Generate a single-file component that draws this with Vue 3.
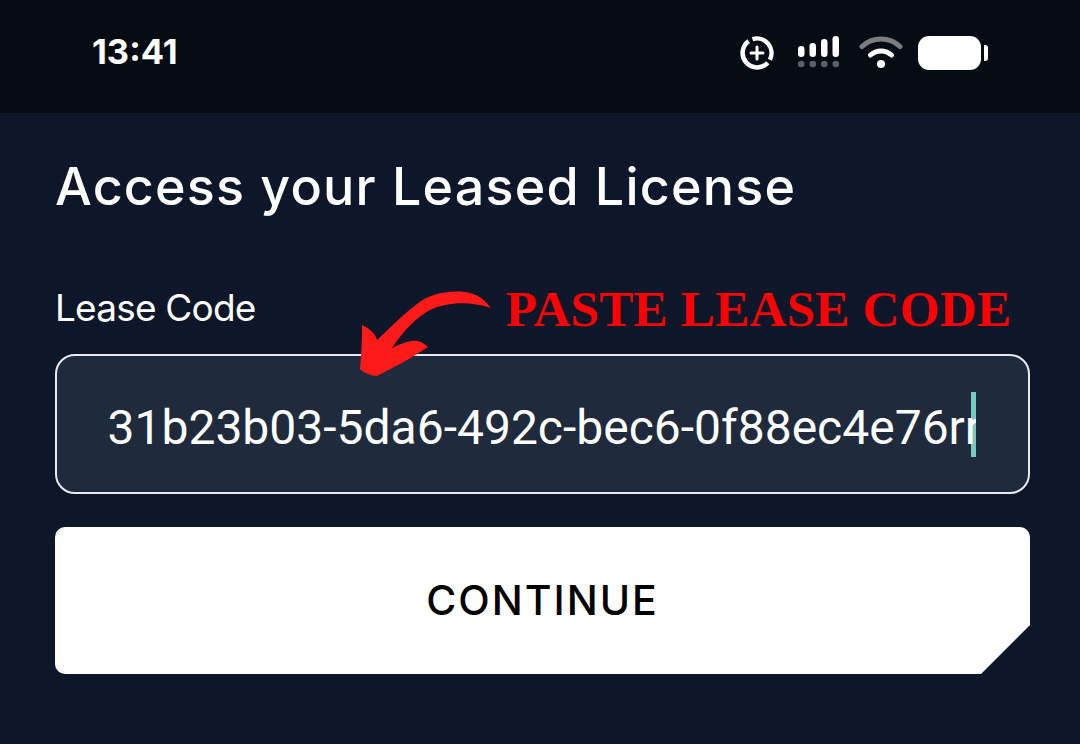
<script setup>
const code = '31b23b03-5da6-492c-bec6-0f88ec4e76rr'
</script>

<template>
  <div class="screen">
    <header class="status">
      <span class="time">13:41</span>
      <div class="icons">
        <svg class="focus" viewBox="0 0 36 36" width="36" height="36">
          <path d="M13.5 4.2A14.5 14.5 0 0 1 30.8 24.8" fill="none" stroke="#fff" stroke-width="4.5" />
          <path d="M28.8 27.700A14.500 14.500 0 1 1 9.700 6.100" fill="none" stroke="#fff" stroke-width="4.500" />
          <path d="M18 12v12M12 18h12" stroke="#fff" stroke-width="3" stroke-linecap="round" />
        </svg>
        <svg class="signal" viewBox="0 0 44 34" width="44" height="34">
          <rect x="1" y="10" width="6.5" height="11" rx="3.2" fill="#fff" />
          <rect x="12.5" y="7" width="6.5" height="14" rx="3.2" fill="#fff" />
          <rect x="24" y="3" width="6.5" height="18" rx="3.2" fill="#fff" />
          <rect x="35.5" y="0" width="6.5" height="21" rx="3.2" fill="#fff" />
          <circle cx="4.2" cy="28" r="3.3" fill="#5b5f66" />
          <circle cx="15.8" cy="28" r="3.3" fill="#5b5f66" />
          <circle cx="27.3" cy="28" r="3.3" fill="#5b5f66" />
          <circle cx="38.8" cy="28" r="3.3" fill="#5b5f66" />
        </svg>
        <svg class="wifi" viewBox="0 0 44 34" width="44" height="34">
          <path d="M3 10.5C13.5 .5 30.500 .5 41 10.500" fill="none" stroke="#7b7d81" stroke-width="5" stroke-linecap="round" />
          <path d="M11.500 19C17.500 13.500 26.500 13.500 32.500 19" fill="none" stroke="#fff" stroke-width="5" stroke-linecap="round" />
          <circle cx="22" cy="28" r="4" fill="#fff" />
        </svg>
        <div class="battery"><span class="cell"></span><span class="nub"></span></div>
      </div>
    </header>

    <main class="content">
      <h1 class="title">Access your Leased License</h1>

      <div class="label-row">
        <label class="label">Lease Code</label>
        <span class="note">PASTE LEASE CODE</span>
        <svg class="arrow" viewBox="0 0 140 100" width="140" height="100">
          <path d="M135.700 29C128 18 118 13 105 12.500C85 12 72 17 62 25C46 37 34 50 22 61C20 54 15 50 7 46C7 66 6 80 5 90C9 94 17 97 22 97C40 88 58 78 73 68C67 63 64 61 57 62C50 63 43 66 37 69C48 52 62 38 75 31C92 23 115 22 135.700 29Z" fill="#ff1a1a" />
        </svg>
      </div>

      <div class="field">
        <span class="value">{{ code }}</span>
        <span class="caret"></span>
      </div>

      <button class="cta" type="button">CONTINUE</button>
    </main>
  </div>
</template>

<style scoped>
.screen {
  width: 1080px;
  height: 744px;
  background: #0d1729;
  overflow: hidden;
  display: flex;
  flex-direction: column;
  color: #fff;
}
.status {
  height: 113px;
  flex: none;
  background: #070b13;
  display: flex;
  justify-content: space-between;
  align-items: center;
  padding: 0 92px 8px 92px;
  box-sizing: border-box;
}
.time {
  font: 700 34.5px/1 Inter, "Liberation Sans", sans-serif;
  letter-spacing: 0;
}
.icons {
  display: flex;
  align-items: center;
}
.focus { margin-right: 22px; }
.signal { margin-right: 18px; }
.wifi { margin-right: 15px; }
.battery {
  display: flex;
  align-items: center;
  gap: 3px;
}
.cell {
  width: 63px;
  height: 34px;
  background: #fff;
  border-radius: 11px;
}
.nub {
  width: 4px;
  height: 16px;
  background: #fff;
  border-radius: 0 3px 3px 0;
}
.content {
  padding: 0 50px 0 55px;
  display: flex;
  flex-direction: column;
}
.title {
  margin: 44px 0 0;
  font: 500 52px/60px Inter, sans-serif;
  letter-spacing: 1.200px;
  color: #fff;
}
.label-row {
  position: relative;
  margin-top: 66px;
  height: 71px;
}
.label {
  display: block;
  padding-top: 1px;
  font: 400 37px/47px Inter, sans-serif;
  letter-spacing: -0.800px;
}
.note {
  position: absolute;
  left: 451px;
  top: 0;
  font: 700 51.500px/52px "Liberation Serif", serif;
  color: #ff0000;
  white-space: nowrap;
}
.arrow {
  position: absolute;
  left: 300px;
  top: -4px;
  z-index: 2;
}
.field {
  height: 140px;
  box-sizing: border-box;
  border: 2.500px solid #e8ebee;
  border-radius: 20px;
  background: #1f2a3c;
  display: flex;
  align-items: center;
  padding-left: 50.500px;
}
.value {
  position: relative;
  z-index: 1;
  font: 400 48px/56px Roboto, sans-serif;
  width: 868px;
  flex: none;
  overflow: hidden;
  white-space: nowrap;
  margin-top: 8px;
}
.caret {
  flex: none;
  width: 5px;
  height: 65px;
  margin-left: -5px;
  background: #7ccabd;
}
.cta {
  margin-top: 33px;
  height: 147px;
  border: none;
  background: #fff;
  color: #000;
  border-radius: 10px;
  font: 500 41px/1 Inter, sans-serif;
  letter-spacing: 2px;
  clip-path: polygon(0 0, 100% 0, 100% 98px, 926px 100%, 0 100%);
}
</style>
